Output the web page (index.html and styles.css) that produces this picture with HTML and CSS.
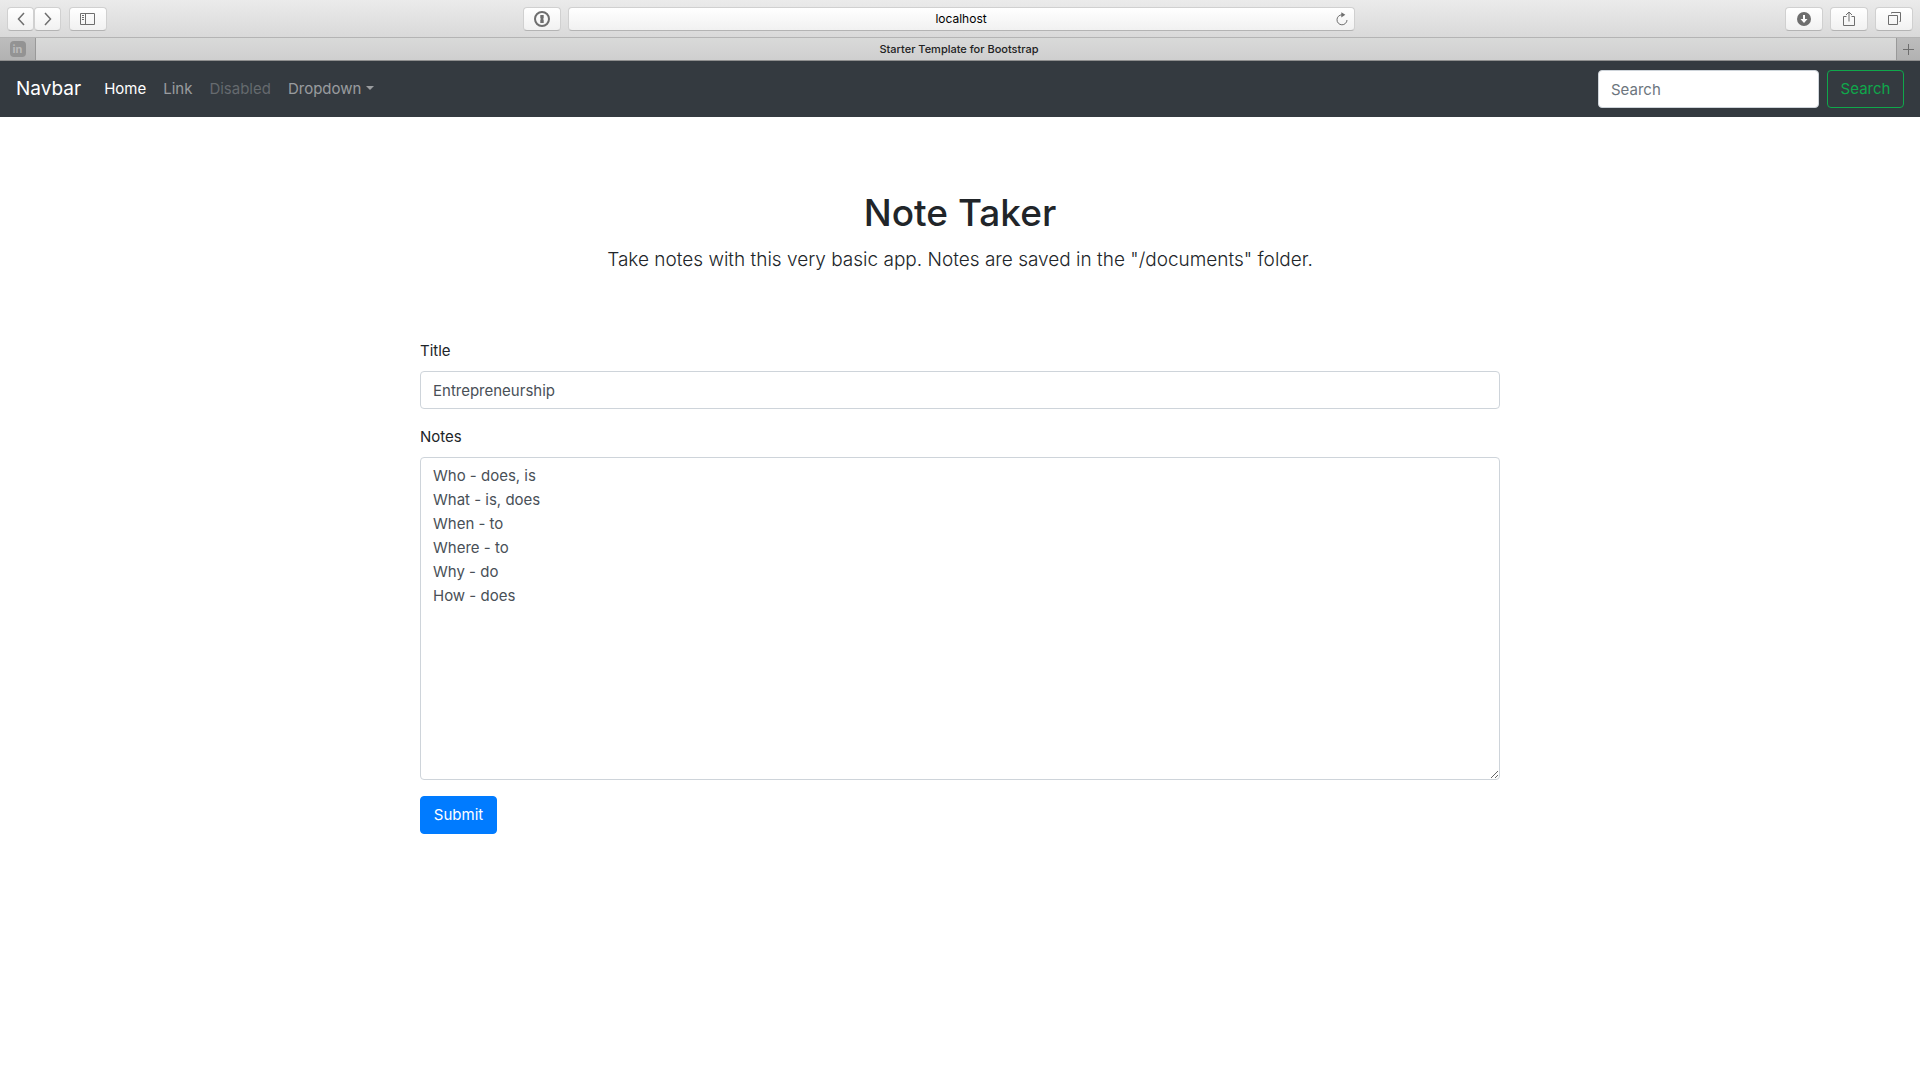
FILE: index.html
```html
<!DOCTYPE html>
<html lang="en">
<head>
<meta charset="utf-8">
<title>Starter Template for Bootstrap</title>
<link rel="stylesheet" href="styles.css">
</head>
<body>
<div class="browser">
  <div class="toolbar">
    <div class="tools">
      <div class="pair">
        <button class="tool tool-nav" aria-label="Back"><svg width="8" height="14" viewBox="0 0 8 14"><path d="M7 1 1.500 7 7 13"/></svg></button>
        <button class="tool tool-nav" aria-label="Forward"><svg width="8" height="14" viewBox="0 0 8 14"><path d="M1 1 6.500 7 1 13"/></svg></button>
      </div>
      <button class="tool" aria-label="Show sidebar"><svg class="thin" width="16" height="12" viewBox="0 0 16 12"><path d="M.5.500h14v11H.5zM5.500.500v11M2 2.500h2M2 4.500h2M2 6.500h2"/></svg></button>
    </div>
    <div class="address">
      <button class="tool" aria-label="1Password"><svg width="16" height="16" viewBox="0 0 16 16"><circle cx="8" cy="8" r="7"/><path class="solid" d="M6.300 4h3.400v3.300l-.7.700.7.700V12H6.300V8.700L7 8l-.7-.7z"/></svg></button>
      <div class="url">
        <input class="url-input" type="text" value="localhost" aria-label="Address">
        <button class="reload" aria-label="Reload"><svg class="thin" width="12" height="14" viewBox="0 0 12 14"><path d="M6 2.800A5 5 0 1 0 11 8"/><path class="solid" d="M5.300.200 9.300 2.800l-4 2.700z"/></svg></button>
      </div>
    </div>
    <div class="tools tools-end">
      <button class="tool" aria-label="Downloads"><svg width="14" height="14" viewBox="0 0 14 14"><circle class="solid" cx="7" cy="7" r="7"/><path class="knock" d="M6 3h2v4h2.500L7 11 3.500 7H6z"/></svg></button>
      <button class="tool" aria-label="Share"><svg class="thin" width="12" height="16" viewBox="0 0 12 16"><path d="M3.500 5.500h-3v9h11v-9h-3M6 10.500V1M3 4l3-3 3 3"/></svg></button>
      <button class="tool" aria-label="Show all tabs"><svg class="thin" width="13" height="13" viewBox="0 0 13 13"><path d="M.5 3.500h9v9h-9zM3.500 1.500v-1h9v9h-1"/></svg></button>
    </div>
  </div>
  <div class="tabs">
    <button class="pinned" aria-label="LinkedIn"><span class="badge">in</span></button>
    <div class="tab">Starter Template for Bootstrap</div>
    <button class="newtab" aria-label="New tab"><svg class="thin" width="11" height="11" viewBox="0 0 11 11"><path d="M5.500 0v11M0 5.500h11"/></svg></button>
  </div>
</div>

<nav class="navbar">
  <a class="brand" href="#">Navbar</a>
  <ul class="nav">
    <li><a class="nav-link active" href="#">Home</a></li>
    <li><a class="nav-link" href="#">Link</a></li>
    <li><a class="nav-link disabled" href="#">Disabled</a></li>
    <li><a class="nav-link dropdown" href="#">Dropdown</a></li>
  </ul>
  <form class="search">
    <input class="control search-input" type="text" placeholder="Search" aria-label="Search">
    <button class="btn btn-outline" type="submit">Search</button>
  </form>
</nav>

<main class="container">
  <header class="intro">
    <h1>Note Taker</h1>
    <p class="lead">Take notes with this very basic app. Notes are saved in the "/documents" folder.</p>
  </header>
  <form class="note-form">
    <div class="group">
      <label for="title">Title</label>
      <input class="control" id="title" type="text" value="Entrepreneurship">
    </div>
    <div class="group">
      <label for="notes">Notes</label>
      <textarea class="control notes" id="notes">Who - does, is
What - is, does
When - to
Where - to
Why - do
How - does</textarea>
    </div>
    <button class="btn btn-primary" type="submit">Submit</button>
  </form>
</main>
</body>
</html>
```
FILE: styles.css
```css
*, *::before, *::after { box-sizing: border-box; }

body {
  margin: 0;
  font-family: Inter, "Liberation Sans", sans-serif;
  font-size: 15px;
  line-height: 24px;
  color: #212529;
  background: #fff;
}

button, input, textarea { font: inherit; margin: 0; }
a { text-decoration: none; }

/* Browser chrome */
.browser { font-size: 12px; color: #000; }

.toolbar {
  display: grid;
  grid-template-columns: 12fr 832px 13fr;
  align-items: center;
  height: 38px;
  padding: 0 7px;
  background: linear-gradient(#ebebeb, #d9d9d9);
  border-bottom: 1px solid #b4b4b4;
}

.tools { display: flex; gap: 8px; }
.tools-end { justify-content: flex-end; gap: 7px; }
.pair { display: flex; }

.tool {
  display: flex;
  align-items: center;
  justify-content: center;
  width: 38px;
  height: 24px;
  padding: 0;
  border: 1px solid #d0d0d0;
  border-bottom-color: #b4b4b4;
  border-radius: 4px;
  background: linear-gradient(#fff, #f1f1f1);
}
.tool-nav { width: 27px; }

svg { display: block; fill: none; stroke: #6e6e6e; stroke-width: 2; }
.thin { stroke-width: 1; }
.tool-nav svg { stroke-width: 1.5; }
.solid { fill: #6e6e6e; stroke: none; }
.knock { fill: #fff; stroke: none; }

.address { display: flex; gap: 7px; }
.url {
  display: flex;
  flex: 1;
  align-items: center;
  height: 24px;
  padding: 0 6px 0 18px;
  border: 1px solid #d0d0d0;
  border-bottom-color: #b4b4b4;
  border-radius: 4px;
  background: linear-gradient(#fff, #f1f1f1);
}
.url-input {
  flex: 1;
  min-width: 0;
  padding: 0;
  border: 0;
  background: none;
  color: #000;
  text-align: center;
}
.reload { padding: 0; border: 0; background: none; }

.tabs {
  display: flex;
  height: 23px;
  border-bottom: 1px solid #8f8f8f;
  background: linear-gradient(#d9dad9, #cfcfcf);
}
.pinned, .newtab {
  display: flex;
  align-items: center;
  justify-content: center;
  padding: 0;
  border: 0 solid #999;
  background: linear-gradient(#bdbdbd, #b2b2b2);
}
.pinned { width: 36px; border-right-width: 1px; }
.newtab { width: 24px; border-left-width: 1px; }
.badge {
  width: 16px;
  height: 16px;
  border-radius: 4px;
  background: #939393;
  color: #bababa;
  font-size: 11px;
  font-weight: 700;
  line-height: 16px;
}
.tab {
  flex: 1;
  padding-right: 14px;
  color: #222;
  font-size: 11px;
  font-weight: 500;
  line-height: 22px;
  text-align: center;
}

/* Site navigation */
.navbar {
  display: flex;
  align-items: center;
  padding: 8px 16px;
  background: #343a40;
}
.brand {
  margin-right: 15px;
  color: #fff;
  font-size: 19px;
  line-height: 32px;
}
.nav {
  display: flex;
  flex: 1;
  gap: 1px;
  margin: 0;
  padding: 0;
  list-style: none;
}
.nav-link {
  display: block;
  padding: 8px;
  color: rgba(255, 255, 255, .5);
}
.active { color: #fff; }
.disabled { color: rgba(255, 255, 255, .25); }
.dropdown::after {
  content: "";
  display: inline-block;
  margin-left: 5px;
  vertical-align: 4px;
  border: 4px solid transparent;
  border-top-color: currentColor;
  border-bottom: 0;
}
.search { display: flex; gap: 8px; }

/* Form controls */
.control {
  display: block;
  width: 100%;
  height: 38px;
  padding: 6px 12px;
  border: 1px solid #ced4da;
  border-radius: 4px;
  background: #fff;
  color: #495057;
}
.control::placeholder { color: #6c757d; opacity: 1; }
.search-input { width: 221px; }

.btn {
  min-width: 77px;
  height: 38px;
  padding: 6px 12px;
  border: 1px solid;
  border-radius: 4px;
}
.btn-outline { border-color: #0fa84b; background: none; color: #0fa84b; }
.btn-primary { border-color: #007bff; background: #007bff; color: #fff; }

/* Page content */
.container {
  max-width: 1140px;
  margin: 0 auto;
  padding: 24px 30px;
}
.intro { padding: 48px 24px; text-align: center; }
h1 {
  margin: 0 0 8px;
  font-size: 37px;
  font-weight: 500;
  line-height: 48px;
}
.lead {
  margin: 0 0 16px;
  font-size: 19px;
  font-weight: 300;
  line-height: 30px;
}
.group { margin-bottom: 16px; }
label { display: block; margin-bottom: 8px; }
.notes { height: 323px; resize: vertical; }
```
